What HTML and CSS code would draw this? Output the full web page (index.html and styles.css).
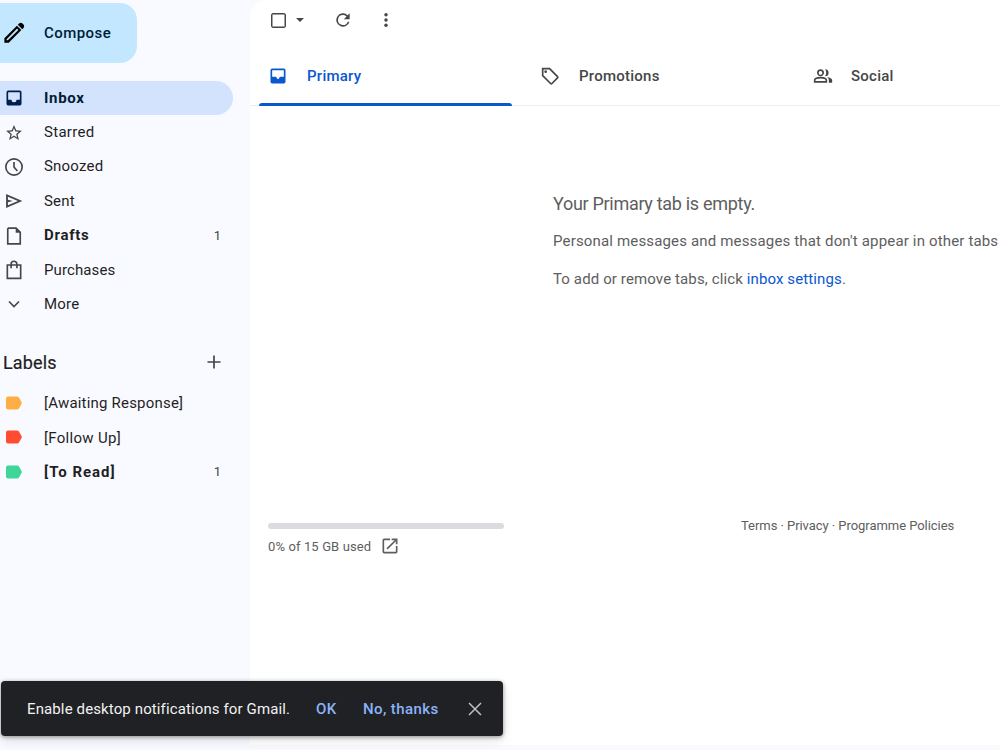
FILE: index.html
```html
<!DOCTYPE html>
<html lang="en">
<head>
    <meta charset="UTF-8">
    <title>Inbox</title>
    <link rel="stylesheet" href="styles.css">
</head>
<body>
<div id="app">
    <div id="side">
        <div class="compose">
            <svg class="pencil" viewBox="0 0 24 24"><path fill-rule="evenodd" d="M1.500 17.700 15.200 4 20 8.800 6.300 22.500H1.500zM4 20h1.300L16.800 8.600 15.400 7.200 4 18.700zM16.200 3 17.800 1.400Q19.600.200 21.200 1.600L22.400 2.800Q23.800 4.400 22.600 6.200L21 7.800z"/></svg>
            <span>Compose</span>
        </div>
        <ul class="nav">
            <li class="active">
                <svg viewBox="0 0 24 24"><path d="M19 3H5a2 2 0 0 0-2 2v14a2 2 0 0 0 2 2h14a2 2 0 0 0 2-2V5a2 2 0 0 0-2-2zm0 11h-4a3 3 0 0 1-6 0H5V5h14z"/></svg>
                <span>Inbox</span>
            </li>
            <li class="starred">
                <svg viewBox="0 0 24 24"><path d="M22 9.740l-7.190-.620L12 2.500 9.190 9.130 2 9.740l5.460 4.730L5.820 21.500 12 17.770l6.180 3.730-1.630-7.030zM12 15.900l-3.760 2.270 1-4.280-3.320-2.880 4.380-.380L12 6.600l1.710 4.040 4.380.380-3.320 2.880 1 4.280z"/></svg>
                <span>Starred</span>
            </li>
            <li>
                <svg viewBox="0 0 24 24"><path class="line" d="M12 2.200a9.800 9.800 0 1 0 0 19.600 9.800 9.800 0 0 0 0-19.600zM12 6v6l4 4.800"/></svg>
                <span>Snoozed</span>
            </li>
            <li>
                <svg viewBox="0 0 24 24"><path fill-rule="evenodd" d="M2.500 3.500v17L22 12zM4.700 6.800l12 5.200-12 5.200v-3.700l6-1.500-6-1.500z"/></svg>
                <span>Sent</span>
            </li>
            <li class="bold">
                <svg viewBox="0 0 24 24"><path class="line" d="M5.500 2.500h9l5 5v14h-15v-18z"/><path d="M14 2v6h6z"/></svg>
                <span>Drafts</span><em>1</em>
            </li>
            <li class="purchases">
                <svg viewBox="0 0 24 24"><path class="line" d="M4 6h16v16H4zM8.500 10V5a3.500 3.500 0 0 1 7 0v5"/></svg>
                <span>Purchases</span>
            </li>
            <li class="more">
                <svg viewBox="0 0 24 24"><path class="line" d="M6 9l6 6 6-6"/></svg>
                <span>More</span>
            </li>
        </ul>
        <div class="title">
            <span>Labels</span>
            <svg viewBox="0 0 20 20"><path class="line" d="M10 3.500v13M3.500 10h13"/></svg>
        </div>
        <ul class="nav labels">
            <li>
                <svg class="orange" viewBox="0 0 18 14"><path d="M3 .500h9q1.200 0 2 1L17 7 14 12.500q-.800 1-2 1H3Q1 13.500 1 11.500v-9Q1 .500 3 .500z"/></svg>
                <span>[Awaiting Response]</span>
            </li>
            <li class="follow">
                <svg class="red" viewBox="0 0 18 14"><path d="M3 .500h9q1.200 0 2 1L17 7 14 12.500q-.800 1-2 1H3Q1 13.500 1 11.500v-9Q1 .500 3 .500z"/></svg>
                <span>[Follow Up]</span>
            </li>
            <li class="bold">
                <svg class="green" viewBox="0 0 18 14"><path d="M3 .500h9q1.200 0 2 1L17 7 14 12.500q-.800 1-2 1H3Q1 13.500 1 11.500v-9Q1 .500 3 .500z"/></svg>
                <span>[To Read]</span><em>1</em>
            </li>
        </ul>
    </div>
    <div id="main">
        <div class="tools">
            <i class="check"></i>
            <i class="arrow"></i>
            <svg class="refresh" viewBox="0 0 24 24"><path d="M17.650 6.350A8 8 0 1 0 19.730 14h-2.080A6 6 0 1 1 12 6c1.660 0 3.140.690 4.220 1.780L13 11h7V4z"/></svg>
            <svg class="dots" viewBox="0 0 24 24"><circle cx="12" cy="5" r="2.300"/><circle cx="12" cy="12" r="2.300"/><circle cx="12" cy="19" r="2.300"/></svg>
        </div>
        <ul class="tabs">
            <li class="active">
                <svg viewBox="0 0 24 24"><path d="M19 3H5a2 2 0 0 0-2 2v14a2 2 0 0 0 2 2h14a2 2 0 0 0 2-2V5a2 2 0 0 0-2-2zm0 10h-4l-2 1.500v1h-2v-1L9 13H5V5h14z"/></svg>
                <span>Primary</span>
            </li>
            <li class="promo">
                <svg viewBox="0 0 24 24"><path class="line" d="M3.200 3.200h8.300L21 12.700q.800.800 0 1.600L14.300 21q-.800.800-1.600 0L3.200 11.500z"/><circle cx="6.800" cy="6.800" r="1.600"/></svg>
                <span>Promotions</span>
            </li>
            <li class="social">
                <svg viewBox="0 0 24 24"><path class="line" d="M9 5a3.200 3.200 0 1 0 0 6.400A3.200 3.200 0 0 0 9 5zM2 19v-1.800C2 14.500 6 14 9 14s7 .500 7 3.200V19z"/><path d="M14.500 4a4.200 4.200 0 0 1 0 8.400c1.800-2.400 1.800-6 0-8.400zM17 13.200c3 .500 6 1.800 6 4V20h-4v-2.800c0-1.700-.800-3-2-4z"/></svg>
                <span>Social</span>
            </li>
        </ul>
        <div class="empty">
            <h2>Your Primary tab is empty.</h2>
            <p class="about">Personal messages and messages that don't appear in other tabs</p>
            <p class="settings">To add or remove tabs, click <a>inbox settings</a>.</p>
        </div>
        <div class="foot">
            <div class="storage">
                <div class="bar"></div>
                <div class="used">
                    <span>0% of 15 GB used</span>
                    <svg viewBox="0 0 24 24"><path d="M19 19H5V5h7V3H5a2 2 0 0 0-2 2v14a2 2 0 0 0 2 2h14a2 2 0 0 0 2-2v-7h-2zM14 3v2h3.590l-9.830 9.830 1.410 1.410L19 6.410V10h2V3z"/></svg>
                </div>
            </div>
            <div class="terms">Terms · Privacy · Programme Policies</div>
        </div>
    </div>
    <div id="notice">
        <span class="msg">Enable desktop notifications for Gmail.</span>
        <a class="ok">OK</a>
        <a class="no">No, thanks</a>
        <svg viewBox="0 0 14 14"><path class="line" d="M1 1l12 12M13 1L1 13"/></svg>
    </div>
</div>
</body>
</html>
```
FILE: styles.css
```css
*{padding: 0;margin: 0;list-style: none;box-sizing: border-box;}
body{width: 1000px;height: 750px;overflow: hidden;background: #f8fafd;font: 15px Roboto, "Liberation Sans", sans-serif;color: #1f1f1f;white-space: nowrap;}
#app{display: flex;width: 1000px;height: 750px;overflow: hidden;}
svg{display: block;flex: none;fill: #444746;}
.line{fill: none;stroke: #444746;stroke-width: 2;}

#side{width: 250px;flex: none;background: #f9faff;}
.compose{display: flex;align-items: center;width: 137px;height: 60px;margin-top: 3px;padding-left: 3px;background: #c2e7ff;border-radius: 0 17px 17px 0;color: #001d35;font-weight: 500;letter-spacing: .45px;}
.compose .pencil{width: 22px;height: 22px;margin-right: 19px;fill: #000;}
.nav{margin-top: 18px;}
.nav li{display: flex;align-items: center;width: 233px;height: 34.450px;padding-left: 4px;letter-spacing: .2px;}
.nav li svg{width: 20px;height: 20px;margin-right: 20px;}
.nav li span{padding-bottom: 1px;}
.nav .active{height: 34px;background: #d3e3fd;border-radius: 0 17px 17px 0;font-weight: 700;letter-spacing: .7px;color: #001d35;}
.nav .active svg{fill: #001d4f;}
.nav .starred svg{padding-top: 1px;}
.nav .starred{letter-spacing: .3px;}
.nav .purchases{letter-spacing: .1px;}
.nav .purchases span, .nav .more span{padding: 0;}
.nav .bold{font-weight: 700;letter-spacing: .7px;}
.nav em{margin-left: auto;margin-right: 12px;font-style: normal;font-weight: 400;font-size: 13px;letter-spacing: 0;color: #444746;}
.title{display: flex;align-items: center;justify-content: space-between;width: 224px;height: 30px;margin-top: 25px;padding-left: 3px;font-size: 18px;letter-spacing: .15px;-webkit-text-stroke: .2px #1f1f1f;}
.title span{padding-top: 1px;}
.title svg{width: 20px;height: 20px;}
.title .line{stroke-width: 1.700;}
.labels{margin-top: 9px;}
.labels li{padding-left: 5px;}
.labels li span{padding: 1px 0 0;}
.labels li svg{width: 18px;height: 14px;margin-right: 21px;}
.labels .follow{letter-spacing: .3px;}
.labels .bold{letter-spacing: 1px;}
.labels .orange{fill: #ffad46;}
.labels .red{fill: #ff4c31;}
.labels .green{fill: #3dd598;}

#main{width: 1100px;height: 745px;flex: none;background: #fff;border-radius: 16px 0 0 0;}
.tools{display: flex;align-items: center;height: 40px;padding-left: 21px;}
.check{width: 15px;height: 15px;border: 1px solid #444746;border-radius: 2px;box-shadow: inset 0 0 0 .5px #444746;}
.arrow{margin-left: 10px;border: 4px solid transparent;border-top-color: #444746;border-bottom: 0;}
.refresh{width: 20px;height: 20px;margin-left: 29px;}
.dots{width: 18px;height: 18px;margin-left: 24px;}
.tabs{display: flex;height: 66px;padding-left: 9px;border-bottom: 1px solid #eceff1;}
.tabs li{display: flex;align-items: center;width: 272px;height: 65px;padding: 6px 0 0 9px;color: #444746;font-weight: 500;letter-spacing: .25px;}
.tabs li svg{width: 20px;height: 20px;margin-right: 18px;}
.tabs li span{padding: 1px 0 0 1px;}
.tabs .social{padding-left: 10px;}
.tabs .social span{padding-left: 0;}
.tabs .active{position: relative;width: 253px;margin-right: 19px;color: #0b57d0;}
.tabs .active svg{fill: #0b57d0;}
.tabs .active:after{content: "";position: absolute;left: 0;bottom: -1px;width: 253px;height: 3px;border-radius: 3px 3px 0 0;background: #0b57d0;}

.empty{height: 410px;padding: 85px 0 0 303px;color: #5e5e5e;}
.empty h2{height: 26px;line-height: 26px;font-size: 18px;font-weight: 400;letter-spacing: -.3px;}
.empty p{height: 20px;margin-top: 14px;line-height: 20px;letter-spacing: .12px;}
.empty .about{letter-spacing: .16px;}
.empty .settings{margin-top: 18px;}
.empty a{color: #0b57d0;}
.foot{display: flex;color: #5e5e5e;font-size: 13px;}
.storage{width: 236px;margin: 7px 237px 0 18px;}
.bar{height: 6px;border-radius: 3px;background: #dadce0;}
.used{display: flex;align-items: center;margin-top: 7px;letter-spacing: .12px;}
.used span{padding-top: 1px;}
.used svg{width: 20px;height: 20px;margin-left: 9px;fill: #5e5e5e;}
.terms{padding-top: 1px;line-height: 18px;letter-spacing: -.05px;}

#notice{position: absolute;left: 1px;top: 681px;display: flex;align-items: center;width: 502px;height: 55px;padding-left: 26px;border-radius: 4px;background: #202124;color: #f2f2f2;box-shadow: 0 1px 4px rgba(0,0,0,.4), 0 5px 12px rgba(0,0,0,.1);}
#notice .msg{width: 289px;letter-spacing: .12px;}
#notice a{color: #8ab4f8;font-weight: 500;letter-spacing: .4px;}
#notice .ok{width: 47px;}
#notice .no{width: 105px;}
#notice svg{width: 14px;height: 14px;}
#notice .line{stroke: #bdc1c6;stroke-width: 1.500;}
```
